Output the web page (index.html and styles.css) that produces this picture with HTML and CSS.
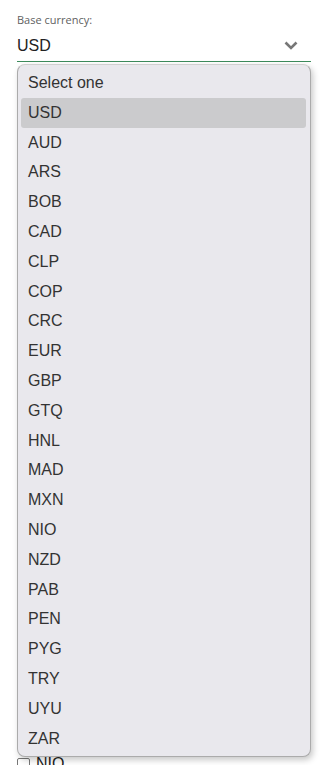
FILE: index.html
```html
<!DOCTYPE html>
<html>
<head>
<meta charset="utf-8">
<link rel="stylesheet" href="styles.css">
</head>
<body>
<div class="page">
  <div class="field">
    <div class="label">Base currency:</div>
    <div class="select">
      <span class="value">USD</span>
      <svg class="chevron" width="14" height="9" viewBox="0 0 14 9"><path d="M1.5 1.5 L7 7 L12.5 1.5" fill="none" stroke="#777" stroke-width="2.6"/></svg>
    </div>
  </div>
  <div class="spacer"></div>
  <label class="check"><span class="box"></span><span class="check-text">NIO</span></label>

  <ul class="dropdown">
    <li class="opt">Select one</li>
    <li class="opt selected">USD</li>
    <li class="opt">AUD</li>
    <li class="opt">ARS</li>
    <li class="opt">BOB</li>
    <li class="opt">CAD</li>
    <li class="opt">CLP</li>
    <li class="opt">COP</li>
    <li class="opt">CRC</li>
    <li class="opt">EUR</li>
    <li class="opt">GBP</li>
    <li class="opt">GTQ</li>
    <li class="opt">HNL</li>
    <li class="opt">MAD</li>
    <li class="opt">MXN</li>
    <li class="opt">NIO</li>
    <li class="opt">NZD</li>
    <li class="opt">PAB</li>
    <li class="opt">PEN</li>
    <li class="opt">PYG</li>
    <li class="opt">TRY</li>
    <li class="opt">UYU</li>
    <li class="opt">ZAR</li>
  </ul>
</div>
</body>
</html>
```
FILE: styles.css
```css
html, body {
  margin: 0;
  padding: 0;
  background: #ffffff;
  width: 320px;
  height: 765px;
  overflow: hidden;
}
.page {
  position: relative;
  padding: 12px 9px 0 17px;
  font-family: "Liberation Sans", Arial, sans-serif;
}
.label {
  font-family: "Open Sans", sans-serif;
  font-size: 11px;
  color: #5f5f5f;
  line-height: 15px;
}
.select {
  display: flex;
  align-items: center;
  justify-content: space-between;
  height: 34px;
  border-bottom: 1px solid #3d8b5c;
}
.value {
  font-size: 16px;
  color: #222;
  padding-top: 4px;
}
.chevron {
  margin-right: 13px;
  margin-top: 2px;
}
.spacer {
  height: 693px;
}
.check {
  display: flex;
  align-items: center;
  gap: 6px;
  font-size: 16px;
  color: #222;
}
.box {
  width: 11px;
  height: 11px;
  border: 1px solid #777;
  border-radius: 2px;
}
.dropdown {
  position: absolute;
  top: 64px;
  left: 17px;
  width: 294px;
  height: 693px;
  box-sizing: border-box;
  margin: 0;
  padding: 3px 4px 4px 3px;
  list-style: none;
  background: #e9e8ed;
  border: 1px solid #ababab;
  border-top-color: #d0d0d0;
  border-radius: 8px;
  box-shadow: 2px 3px 6px rgba(0,0,0,0.22);
}
.opt {
  height: 29.8px;
  line-height: 29.8px;
  padding-left: 7px;
  font-size: 16px;
  color: #333;
  border-radius: 3px;
}
.opt.selected {
  background: #cbcbcd;
}
```
